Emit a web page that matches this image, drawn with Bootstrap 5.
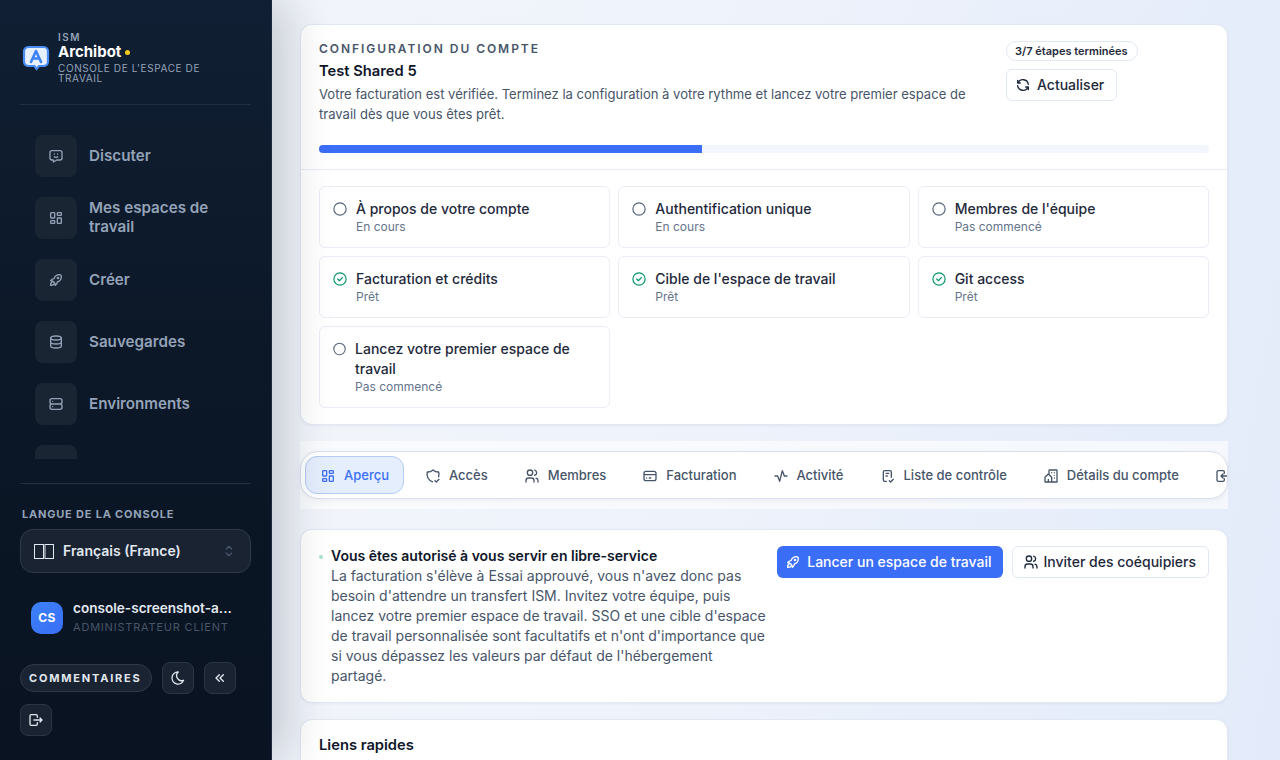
<!DOCTYPE html>
<html lang="fr">
<head>
<meta charset="UTF-8">
<title>Archibot</title>
<link href="https://cdn.jsdelivr.net/npm/bootstrap@5.3.0/dist/css/bootstrap.min.css" rel="stylesheet">
<style>
html, body { height: 760px; overflow: hidden; }
body { font-family: Inter, "Liberation Sans", sans-serif; color: #0f172a; background: linear-gradient(100deg, #f3f5fa 0%, #eff3fb 50%, #e3ebfa 100%); }
svg.ic { fill: none; stroke: currentColor; stroke-width: 2; stroke-linecap: round; stroke-linejoin: round; flex-shrink: 0; }
.sidebar { width: 272px; height: 760px; background: linear-gradient(180deg, #101f33 0%, #0c1828 45%, #091321 100%); border-right: 1px solid #1c2a3f; box-shadow: 14px 0 44px rgba(15,23,42,.2); position: relative; z-index: 2; }
.brand { margin: 0 20px; height: 105px; padding: 31px 20px 0 2px; border-bottom: 1px solid #222f43; gap: 8px; }
.brand-logo { width: 28px; height: 26px; margin-top: 14px; }
.brand-ism { font-size: 10px; line-height: 12px; font-weight: 600; letter-spacing: 1.5px; color: #94a3b8; }
.brand-name { font-size: 15px; line-height: 18px; font-weight: 700; color: #fff; }
.brand-dot { width: 5px; height: 5px; background: #facc15; margin-left: 4px; }
.brand-sub { font-size: 10px; line-height: 10px; letter-spacing: .6px; color: #94a3b8; margin-top: 2px; }
.side-nav { height: 354px; overflow: hidden; padding: 30px 20px 0 35px; gap: 20px; }
.side-item { gap: 12px; font-size: 15.2px; line-height: 19px; font-weight: 600; color: #94a3b8; flex-shrink: 0; }
.side-item > span:last-child { padding-bottom: 1px; }
.side-item > span.two-line { padding-bottom: 3px; }
.side-icon { width: 42px; height: 42px; border-radius: 8px; background: #1a2534; color: #94a3b8; flex-shrink: 0; }
.side-foot { margin: 24px 20px 0; border-top: 1px solid #222f43; padding-top: 23px; }
.lang-label { font-size: 11px; line-height: 14px; font-weight: 700; letter-spacing: .8px; color: #94a3b8; padding-left: 2px; margin-bottom: 8px; }
.lang-select { height: 44px; border-radius: 13px; background: #192332; border: 1px solid #2e394b; padding: 0 13px; gap: 9px; color: #e2e8f0; font-size: 14px; font-weight: 600; }
.lang-select > span { padding-bottom: 1px; }
.lang-select rect { fill: none; stroke: #e2e8f0; }
.lang-chevron { color: #475569; }
.user-row { height: 32px; margin-top: 29px; padding-left: 11px; gap: 10px; }
.avatar { width: 32px; height: 32px; border-radius: 10px; background: linear-gradient(135deg, #3b82f6, #3b6ef6); color: #fff; font-size: 12px; font-weight: 700; letter-spacing: .5px; flex-shrink: 0; }
.user-text { margin-bottom: 3px; }
.user-name { font-size: 13.6px; line-height: 18px; font-weight: 600; color: #e2e8f0; }
.user-role { font-size: 11px; line-height: 14px; letter-spacing: .8px; color: #475569; margin-top: 3px; }
.foot-actions { margin-top: 28px; gap: 10px; }
.btn-fb { height: 28px; margin-top: 2px; padding: 0 9px 0 8px; border-radius: 14px; background: #192332; border: 1px solid #2e394b; color: #e2e8f0; font-size: 11px; font-weight: 700; letter-spacing: 1.8px; }
.btn-sq { width: 32px; height: 32px; border-radius: 8px; background: #192332; border: 1px solid #2a3547; color: #e2e8f0; }
.content { min-width: 0; padding: 24px 52px 0 28px; }
.panel { background: #fff; border: 1px solid #e1e7f3; border-radius: 12px; box-shadow: 0 1px 3px rgba(15,23,42,.05); }
.setup-head { padding: 17px 18px 16px; border-bottom: 1px solid #e9edf5; }
.setup-main { width: 660px; }
.eyebrow { font-size: 12px; line-height: 14px; font-weight: 600; letter-spacing: 1.95px; color: #475569; }
.setup-title { font-size: 14.72px; line-height: 20px; font-weight: 600; margin-top: 5px; }
.setup-desc { font-size: 13.06px; line-height: 19.5px; color: #475569; margin-top: 4px; }
.setup-side { width: 203px; margin-top: -1px; }
.step-count { font-size: 11px; line-height: 14px; font-weight: 600; color: #1e293b; border: 1px solid #e1e7f3; border-radius: 10px; padding: 2px 9px 2px 8px; margin-bottom: 8px; }
.btn-soft { background: #fff; border: 1px solid #e1e7f3; border-radius: 6px; color: #1e293b; font-size: 14px; line-height: 20px; font-weight: 500; padding: 5px 12px 5px 8px; gap: 6px; }
.setup-progress { height: 8px; background: #f3f6fc; margin-top: 21px; border-radius: 4px; }
.setup-progress .progress-bar { background: #3b6ef6; }
.step-grid { display: grid; grid-template-columns: repeat(3, 1fr); gap: 8px; padding: 16px 18px; }
.step { border: 1px solid #e9edf5; border-radius: 6px; padding: 12px 13px; gap: 9px; }
.step svg.ic { margin-top: 3px; color: #56657b; flex-shrink: 1; }
.step svg.ic.done { color: #059669; }
.step-name { font-size: 14px; line-height: 20px; font-weight: 500; color: #1e293b; }
.step-state { font-size: 12px; line-height: 16px; color: #64748b; }
.tab-strip { margin-top: 16px; padding: 10px 0; background: rgba(255,255,255,.6); }
.tab-bar { height: 48px; background: #fff; border: 1px solid #d8dfee; border-radius: 18px; padding: 4px; gap: 6px; overflow: hidden; box-shadow: 0 2px 6px rgba(15,23,42,.05); }
.tab-item { height: 38px; border: 1px solid transparent; border-radius: 12px; padding: 1px 14px 0 14px; gap: 8px; font-size: 13px; font-weight: 500; color: #475569; flex-shrink: 0; }
.tab-item.active { background: #e4eefd; border-color: #b5caf6; color: #3b6ef6; }
.notice { margin-top: 20px; padding: 16px 18px; gap: 8px; }
.notice-dot { width: 4px; height: 4px; background: #a7e3cf; margin-top: 9px; flex-shrink: 0; }
.notice-text { font-size: 14px; line-height: 20px; color: #475569; width: 436px; flex-shrink: 0; }
.notice-text strong { color: #0f172a; font-weight: 600; }
.notice-actions { gap: 9px; }
.btn-launch { background: #3b6ef6; border: 0; border-radius: 6px; color: #fff; font-size: 14px; line-height: 20px; font-weight: 500; height: 32px; padding: 0 11px 0 8px; gap: 6px; }
.btn-invite { height: 32px; padding: 0 12px 0 10px; gap: 5px; }
.quick { margin-top: 16px; padding: 15px 18px; font-size: 14.72px; line-height: 20px; font-weight: 600; height: 100px; }
</style>
</head>
<body class="d-flex">
<aside class="sidebar d-flex flex-column flex-shrink-0">
  <div class="brand d-flex align-items-start">
    <svg class="brand-logo flex-shrink-0" viewBox="0 0 28 26">
      <path d="M6.500 2h15A4.500 4.500 0 0 1 26 6.500v10a4.500 4.500 0 0 1-4.500 4.500h-4.500l-2.500 3-2-3H6.500A4.500 4.500 0 0 1 2 16.500v-10A4.500 4.500 0 0 1 6.500 2z" fill="#e6f0ff" stroke="#4b8df8" stroke-width="2.200"/>
      <path d="M9 17l5-11 5 11M10.800 13.500h6.400" fill="none" stroke="#3b82f6" stroke-width="2.600" stroke-linecap="round" stroke-linejoin="round"/>
    </svg>
    <div>
      <div class="brand-ism">ISM</div>
      <div class="brand-name d-flex align-items-center">Archibot<span class="brand-dot rounded-circle"></span></div>
      <div class="brand-sub">CONSOLE DE L'ESPACE DE TRAVAIL</div>
    </div>
  </div>
  <nav class="side-nav d-flex flex-column">
    <div class="side-item d-flex align-items-center"><span class="side-icon d-flex align-items-center justify-content-center"><svg class="ic" width="16" height="16" viewBox="0 0 24 24"><path d="M18 4a3 3 0 0 1 3 3v8a3 3 0 0 1-3 3h-5l-5 3v-3h-2a3 3 0 0 1-3-3v-8a3 3 0 0 1 3-3h12z"/><path d="M9.500 9h.01M14.500 9h.01M9.500 13a3.500 3.500 0 0 0 5 0"/></svg></span><span>Discuter</span></div>
    <div class="side-item d-flex align-items-center"><span class="side-icon d-flex align-items-center justify-content-center"><svg class="ic" width="16" height="16" viewBox="0 0 24 24"><path d="M5 4h4a1 1 0 0 1 1 1v6a1 1 0 0 1-1 1h-4a1 1 0 0 1-1-1v-6a1 1 0 0 1 1-1M5 16h4a1 1 0 0 1 1 1v2a1 1 0 0 1-1 1h-4a1 1 0 0 1-1-1v-2a1 1 0 0 1 1-1M15 12h4a1 1 0 0 1 1 1v6a1 1 0 0 1-1 1h-4a1 1 0 0 1-1-1v-6a1 1 0 0 1 1-1M15 4h4a1 1 0 0 1 1 1v2a1 1 0 0 1-1 1h-4a1 1 0 0 1-1-1v-2a1 1 0 0 1 1-1"/></svg></span><span class="two-line">Mes espaces de travail</span></div>
    <div class="side-item d-flex align-items-center"><span class="side-icon d-flex align-items-center justify-content-center"><svg class="ic" width="16" height="16" viewBox="0 0 24 24"><path d="M4 13a8 8 0 0 1 7 7a6 6 0 0 0 3-5a9 9 0 0 0 6-8a3 3 0 0 0-3-3a9 9 0 0 0-8 6a6 6 0 0 0-5 3"/><path d="M7 14a6 6 0 0 0-3 6a6 6 0 0 0 6-3"/><circle cx="15" cy="9" r="1"/></svg></span><span>Créer</span></div>
    <div class="side-item d-flex align-items-center"><span class="side-icon d-flex align-items-center justify-content-center"><svg class="ic" width="16" height="16" viewBox="0 0 24 24"><ellipse cx="12" cy="6" rx="8" ry="3"/><path d="M4 6v6a8 3 0 0 0 16 0v-6M4 12v6a8 3 0 0 0 16 0v-6"/></svg></span><span>Sauvegardes</span></div>
    <div class="side-item d-flex align-items-center"><span class="side-icon d-flex align-items-center justify-content-center"><svg class="ic" width="16" height="16" viewBox="0 0 24 24"><path d="M3 7a3 3 0 0 1 3-3h12a3 3 0 0 1 3 3v2a3 3 0 0 1-3 3h-12a3 3 0 0 1-3-3zM3 15a3 3 0 0 1 3-3h12a3 3 0 0 1 3 3v2a3 3 0 0 1-3 3h-12a3 3 0 0 1-3-3z"/><path d="M7 8v.01M7 16v.01"/></svg></span><span>Environments</span></div>
    <div class="side-item d-flex align-items-center"><div class="side-icon"></div></div>
  </nav>
  <div class="side-foot">
    <div class="lang-label">LANGUE DE LA CONSOLE</div>
    <div class="lang-select d-flex align-items-center">
      <svg width="20" height="15" viewBox="0 0 20 15" class="flex-shrink-0"><rect x=".5" y=".5" width="9" height="14"/><rect x="11" y=".5" width="8.500" height="14"/></svg>
      <span class="flex-grow-1">Français (France)</span>
      <svg class="ic lang-chevron" width="16" height="16" viewBox="0 0 24 24"><path d="M8 9l4-4l4 4M16 15l-4 4l-4-4"/></svg>
    </div>
    <div class="user-row d-flex align-items-center">
      <span class="avatar d-flex align-items-center justify-content-center">CS</span>
      <div class="user-text overflow-hidden">
        <div class="user-name text-truncate">console-screenshot-a...</div>
        <div class="user-role text-nowrap">ADMINISTRATEUR CLIENT</div>
      </div>
    </div>
    <div class="foot-actions d-flex flex-wrap align-items-start">
      <button class="btn-fb" type="button">COMMENTAIRES</button>
      <button class="btn-sq d-flex align-items-center justify-content-center p-0" type="button"><svg class="ic" width="16" height="16" viewBox="0 0 24 24"><path d="M12 3c.132 0 .263 0 .393 0a7.500 7.500 0 0 0 7.920 12.446a9 9 0 1 1-8.313-12.454z"/></svg></button>
      <button class="btn-sq d-flex align-items-center justify-content-center p-0" type="button"><svg class="ic" width="16" height="16" viewBox="0 0 24 24"><path d="M11 7l-5 5l5 5M17 7l-5 5l5 5"/></svg></button>
      <button class="btn-sq d-flex align-items-center justify-content-center p-0" type="button"><svg class="ic" width="16" height="16" viewBox="0 0 24 24"><path d="M14 8v-2a2 2 0 0 0-2-2h-7a2 2 0 0 0-2 2v12a2 2 0 0 0 2 2h7a2 2 0 0 0 2-2v-2M9 12h12l-3-3M18 15l3-3"/></svg></button>
    </div>
  </div>
</aside>
<main class="content flex-grow-1">
  <section class="panel">
    <div class="setup-head">
      <div class="d-flex justify-content-between">
        <div class="setup-main">
          <div class="eyebrow">CONFIGURATION DU COMPTE</div>
          <div class="setup-title">Test Shared 5</div>
          <div class="setup-desc">Votre facturation est vérifiée. Terminez la configuration à votre rythme et lancez votre premier espace de travail dès que vous êtes prêt.</div>
        </div>
        <div class="setup-side d-flex flex-column align-items-start">
          <span class="step-count">3/7 étapes terminées</span>
          <button class="btn-soft d-flex align-items-center" type="button"><svg class="ic" width="16" height="16" viewBox="0 0 24 24"><path d="M20 11a8.100 8.100 0 0 0-15.500-2m-.5-4v4h4M4 13a8.100 8.100 0 0 0 15.500 2m.5 4v-4h-4"/></svg>Actualiser</button>
        </div>
      </div>
      <div class="progress setup-progress"><div class="progress-bar" style="width:43%"></div></div>
    </div>
    <div class="step-grid">
      <div class="step d-flex align-items-start"><svg class="ic" width="14" height="14" viewBox="0 0 24 24"><circle cx="12" cy="12" r="10.500"/></svg><div><div class="step-name">À propos de votre compte</div><div class="step-state">En cours</div></div></div>
      <div class="step d-flex align-items-start"><svg class="ic" width="14" height="14" viewBox="0 0 24 24"><circle cx="12" cy="12" r="10.500"/></svg><div><div class="step-name">Authentification unique</div><div class="step-state">En cours</div></div></div>
      <div class="step d-flex align-items-start"><svg class="ic" width="14" height="14" viewBox="0 0 24 24"><circle cx="12" cy="12" r="10.500"/></svg><div><div class="step-name">Membres de l'équipe</div><div class="step-state">Pas commencé</div></div></div>
      <div class="step d-flex align-items-start"><svg class="ic done" width="14" height="14" viewBox="0 0 24 24"><circle cx="12" cy="12" r="10.500"/><path d="M8 12l3 3l5-5.500"/></svg><div><div class="step-name">Facturation et crédits</div><div class="step-state">Prêt</div></div></div>
      <div class="step d-flex align-items-start"><svg class="ic done" width="14" height="14" viewBox="0 0 24 24"><circle cx="12" cy="12" r="10.500"/><path d="M8 12l3 3l5-5.500"/></svg><div><div class="step-name">Cible de l'espace de travail</div><div class="step-state">Prêt</div></div></div>
      <div class="step d-flex align-items-start"><svg class="ic done" width="14" height="14" viewBox="0 0 24 24"><circle cx="12" cy="12" r="10.500"/><path d="M8 12l3 3l5-5.500"/></svg><div><div class="step-name">Git access</div><div class="step-state">Prêt</div></div></div>
      <div class="step d-flex align-items-start"><svg class="ic" width="14" height="14" viewBox="0 0 24 24"><circle cx="12" cy="12" r="10.500"/></svg><div><div class="step-name">Lancez votre premier espace de travail</div><div class="step-state">Pas commencé</div></div></div>
    </div>
  </section>
  <div class="tab-strip">
    <div class="tab-bar d-flex align-items-center">
      <div class="tab-item active d-flex align-items-center"><svg class="ic" width="16" height="16" viewBox="0 0 24 24"><path d="M5 4h4a1 1 0 0 1 1 1v6a1 1 0 0 1-1 1h-4a1 1 0 0 1-1-1v-6a1 1 0 0 1 1-1M5 16h4a1 1 0 0 1 1 1v2a1 1 0 0 1-1 1h-4a1 1 0 0 1-1-1v-2a1 1 0 0 1 1-1M15 12h4a1 1 0 0 1 1 1v6a1 1 0 0 1-1 1h-4a1 1 0 0 1-1-1v-6a1 1 0 0 1 1-1M15 4h4a1 1 0 0 1 1 1v2a1 1 0 0 1-1 1h-4a1 1 0 0 1-1-1v-2a1 1 0 0 1 1-1"/></svg>Aperçu</div>
      <div class="tab-item d-flex align-items-center"><svg class="ic" width="16" height="16" viewBox="0 0 24 24"><path d="M11.460 20.846a12 12 0 0 1-7.960-14.846a12 12 0 0 0 8.500-3a12 12 0 0 0 8.500 3a12 12 0 0 1-.09 7.060M15 19l2 2l4-4"/></svg>Accès</div>
      <div class="tab-item d-flex align-items-center"><svg class="ic" width="16" height="16" viewBox="0 0 24 24"><circle cx="9" cy="7" r="4"/><path d="M3 21v-2a4 4 0 0 1 4-4h4a4 4 0 0 1 4 4v2M16 3.130a4 4 0 0 1 0 7.750M21 21v-2a4 4 0 0 0-3-3.850"/></svg>Membres</div>
      <div class="tab-item d-flex align-items-center"><svg class="ic" width="16" height="16" viewBox="0 0 24 24"><path d="M3 8a3 3 0 0 1 3-3h12a3 3 0 0 1 3 3v8a3 3 0 0 1-3 3h-12a3 3 0 0 1-3-3zM3 10h18M7 15h.01M11 15h2"/></svg>Facturation</div>
      <div class="tab-item d-flex align-items-center"><svg class="ic" width="16" height="16" viewBox="0 0 24 24"><path d="M3 12h4l3 8l4-16l3 8h4"/></svg>Activité</div>
      <div class="tab-item d-flex align-items-center"><svg class="ic" width="16" height="16" viewBox="0 0 24 24"><path d="M9.615 20h-2.615a2 2 0 0 1-2-2v-12a2 2 0 0 1 2-2h8a2 2 0 0 1 2 2v8M14 19l2 2l4-4M9 8h4M9 12h2"/></svg>Liste de contrôle</div>
      <div class="tab-item d-flex align-items-center"><svg class="ic" width="16" height="16" viewBox="0 0 24 24"><path d="M8 9l5 5v7h-5v-4m0 4h-5v-7l5-5m1 1v-6a1 1 0 0 1 1-1h10a1 1 0 0 1 1 1v17h-8M13 7v.01M17 7v.01M17 11v.01M17 15v.01"/></svg>Détails du compte</div>
      <div class="tab-item d-flex align-items-center"><svg class="ic" width="16" height="16" viewBox="0 0 24 24"><path d="M14 8v-2a2 2 0 0 0-2-2h-7a2 2 0 0 0-2 2v12a2 2 0 0 0 2 2h7a2 2 0 0 0 2-2v-2M21 12h-12l3-3M12 15l-3-3"/></svg></div>
    </div>
  </div>
  <section class="panel notice d-flex align-items-start">
    <span class="notice-dot rounded-circle"></span>
    <div class="notice-text"><strong>Vous êtes autorisé à vous servir en libre-service</strong><br>La facturation s'élève à Essai approuvé, vous n'avez donc pas besoin d'attendre un transfert ISM. Invitez votre équipe, puis lancez votre premier espace de travail. SSO et une cible d'espace de travail personnalisée sont facultatifs et n'ont d'importance que si vous dépassez les valeurs par défaut de l'hébergement partagé.</div>
    <div class="notice-actions d-flex ms-auto">
      <button class="btn-launch d-flex align-items-center" type="button"><svg class="ic" width="16" height="16" viewBox="0 0 24 24"><path d="M4 13a8 8 0 0 1 7 7a6 6 0 0 0 3-5a9 9 0 0 0 6-8a3 3 0 0 0-3-3a9 9 0 0 0-8 6a6 6 0 0 0-5 3"/><path d="M7 14a6 6 0 0 0-3 6a6 6 0 0 0 6-3"/><circle cx="15" cy="9" r="1"/></svg>Lancer un espace de travail</button>
      <button class="btn-soft btn-invite d-flex align-items-center" type="button"><svg class="ic" width="16" height="16" viewBox="0 0 24 24"><circle cx="9" cy="7" r="4"/><path d="M3 21v-2a4 4 0 0 1 4-4h4a4 4 0 0 1 4 4v2M16 3.130a4 4 0 0 1 0 7.750M21 21v-2a4 4 0 0 0-3-3.850"/></svg>Inviter des coéquipiers</button>
    </div>
  </section>
  <section class="panel quick">Liens rapides</section>
</main>
<script src="https://cdn.jsdelivr.net/npm/bootstrap@5.3.0/dist/js/bootstrap.bundle.min.js"></script>
</body>
</html>
